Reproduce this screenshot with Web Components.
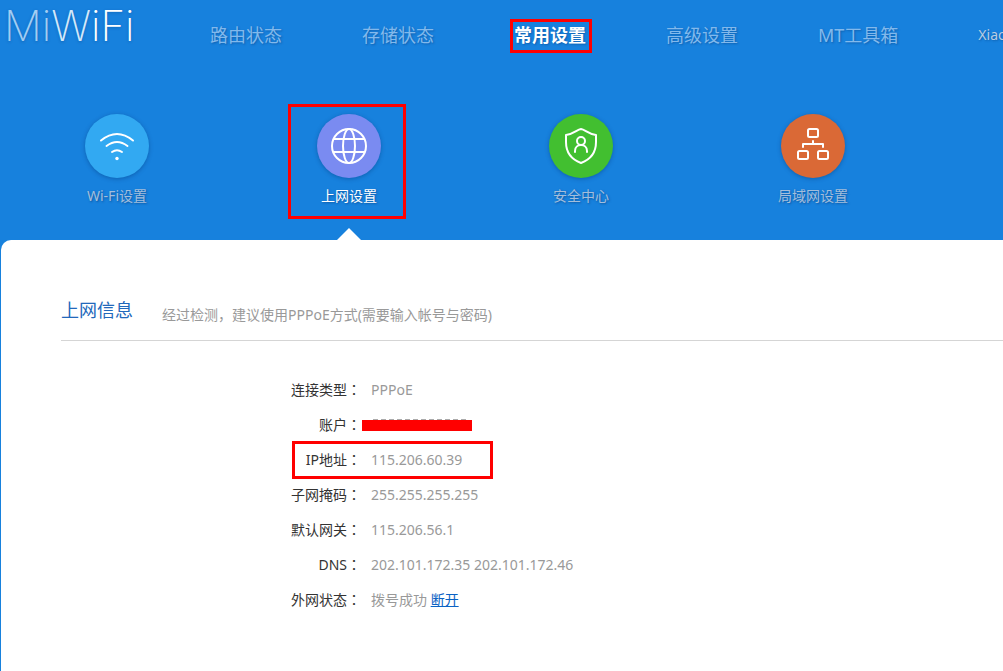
<!DOCTYPE html>
<html lang="zh-CN">
<head>
<meta charset="utf-8">
<title>MiWiFi</title>
<style>
html,body{margin:0;min-height:100%}
body{background:#1781dd;font-family:"Noto Sans","Noto Sans CJK SC",sans-serif;font-size:14px;line-height:20px;color:#333}
</style>
</head>
<body>
<router-page></router-page>
<script>
const define=(name,html)=>customElements.define(name,class extends HTMLElement{
  constructor(){super();this.attachShadow({mode:"open"}).innerHTML=html;}
});

define("brand-logo",`<style>
:host{display:block;flex:none;width:202px}
a{display:block;color:#fff;text-decoration:none;font:200 42px/52px Inter,sans-serif;padding-left:4px;text-shadow:0 1px 3px rgba(0,50,110,.3)}
.a{color:#a2cdf3}.b{color:#d3e8fa}
</style><a href="#"><span class="a">Mi</span><span class="b">W</span>iFi</a>`);

define("nav-item",`<style>
:host{display:block;flex:none;position:relative}
a{display:block;color:#82b9ec;text-decoration:none;font-size:18px;line-height:28px;white-space:nowrap;text-shadow:1px 1px 2px rgba(0,50,110,.4)}
:host([active]) a{color:#fff;font-weight:700}
:host([active])::after{content:"";position:absolute;inset:-2px -6px -4px -4px;border:3px solid #f00}
:host([small]) a{font-size:14px;color:#b9cce2}
</style><a href="#"><slot></slot></a>`);

define("top-bar",`<style>
:host{display:flex;height:100px}
nav{display:flex;flex:1;min-width:0;overflow:hidden;align-items:flex-start;gap:80px;padding:21px 0 0 8px}
</style><brand-logo></brand-logo><nav>
<nav-item>路由状态</nav-item><nav-item>存储状态</nav-item><nav-item active>常用设置</nav-item><nav-item>高级设置</nav-item><nav-item>MT工具箱</nav-item><nav-item small>Xiao</nav-item></nav>`);

define("sub-item",`<style>
:host{display:block;flex:0 0 232px;position:relative;height:140px}
a{display:flex;flex-direction:column;align-items:center;gap:8px;padding-top:14px;color:#a3bedc;text-decoration:none;text-shadow:1px 1px 2px rgba(0,50,110,.5)}
.disc{width:64px;height:64px;border-radius:50%;background:var(--disc);box-shadow:0 1px 4px rgba(0,50,110,.4)}
:host([active]) a{color:#fff}
:host([active])::before{content:"";position:absolute;left:104px;bottom:0;border:12px solid transparent;border-top:0;border-bottom-color:#fff}
:host([active])::after{content:"";position:absolute;box-sizing:border-box;left:55px;top:4px;width:118px;height:115px;border:3px solid #f00}
</style><a href="#"><span class="disc"><slot name="icon"></slot></span><span><slot></slot></span></a>`);

define("sub-nav",`<style>
:host{display:flex;overflow:hidden;margin-left:1px}
svg{display:block;fill:none;stroke:#fff;stroke-width:2;stroke-linecap:round;stroke-linejoin:round}
</style>
<sub-item style="--disc:#32a9f2"><svg slot="icon" width="64" height="64" viewBox="0 0 64 64"><path d="M16 26.500Q32 13.500 48 26.500M21.500 32Q32 24 42.500 32M27 38Q32 34.500 37 38"/><circle cx="32" cy="44.500" r="1.700" fill="#fff" stroke="none"/></svg>Wi-Fi设置</sub-item>
<sub-item active style="--disc:#7a8bf1"><svg slot="icon" width="64" height="64" viewBox="0 0 64 64"><circle cx="32" cy="32" r="17"/><ellipse cx="32" cy="32" rx="6" ry="17"/><path d="M17 25H47M17 38H47"/></svg>上网设置</sub-item>
<sub-item style="--disc:#42bf30"><svg slot="icon" width="64" height="64" viewBox="0 0 64 64"><path d="M32 15C28 15.500 25 20 17 21V28C17 40 24 46 32 49C40 46 47 40 47 28V21C39 20 36 15.500 32 15Z"/><circle cx="32" cy="27" r="4"/><path d="M26 38V37C26 29 38 29 38 37V38"/></svg>安全中心</sub-item>
<sub-item style="--disc:#da6936"><svg slot="icon" width="64" height="64" viewBox="0 0 64 64"><rect x="27" y="15" width="10" height="8" rx="1.500"/><rect x="17" y="37" width="10" height="8" rx="1.500"/><rect x="37" y="37" width="10" height="8" rx="1.500"/><path d="M32 27V30M22 33V30H42V33"/></svg>局域网设置</sub-item>`);

define("info-row",`<style>
:host{display:flex;gap:10px;position:relative;height:35px;line-height:20px}
.k{flex:0 0 300px;text-align:right;color:#333}
.v{color:#999}
:host([marked])::after{content:"";position:absolute;box-sizing:border-box;left:231px;top:-9px;width:201px;height:38px;border:3px solid #f00}
</style><span class="k"><slot name="label"></slot><span lang="zh-TW">：</span></span><span class="v"><slot></slot></span>`);

define("info-panel",`<style>
:host{display:block;background:#fff;border-radius:10px 0 0 0;margin-left:1px;min-height:431px;box-sizing:border-box;padding:56px 0 40px 60px}
header{display:flex;gap:29px;border-bottom:1px solid #d5d5d5;height:44px}
h2{margin:0;font-size:18px;line-height:28px;font-weight:400;color:#2268bb}
p{margin:0;line-height:38px;color:#999}
section{padding-top:39px}
a{color:#0a62c4}
.mask{display:block;width:110px;height:11px;background:#f00;margin:5px 0 0 -9px}
.mask::before{content:"";display:block;position:relative;top:-1px;height:1px;margin:0 4px 0 11px;background:repeating-linear-gradient(90deg,#aaa 0 5px,#fff 5px 8px)}
</style>
<header><h2>上网信息</h2><p>经过检测，建议使用PPPoE方式(需要输入帐号与密码)</p></header>
<section>
<info-row><span slot="label">连接类型</span>PPPoE</info-row>
<info-row><span slot="label">账户</span><span class="mask"></span></info-row>
<info-row marked><span slot="label">IP地址</span>115.206.60.39</info-row>
<info-row><span slot="label">子网掩码</span>255.255.255.255</info-row>
<info-row><span slot="label">默认网关</span>115.206.56.1</info-row>
<info-row><span slot="label">DNS</span>202.101.172.35 202.101.172.46</info-row>
<info-row><span slot="label">外网状态</span>拨号成功 <a href="#">断开</a></info-row>
</section>`);

define("router-page",`<style>:host{display:block}</style><top-bar></top-bar><sub-nav></sub-nav><info-panel></info-panel>`);
</script>
</body>
</html>
